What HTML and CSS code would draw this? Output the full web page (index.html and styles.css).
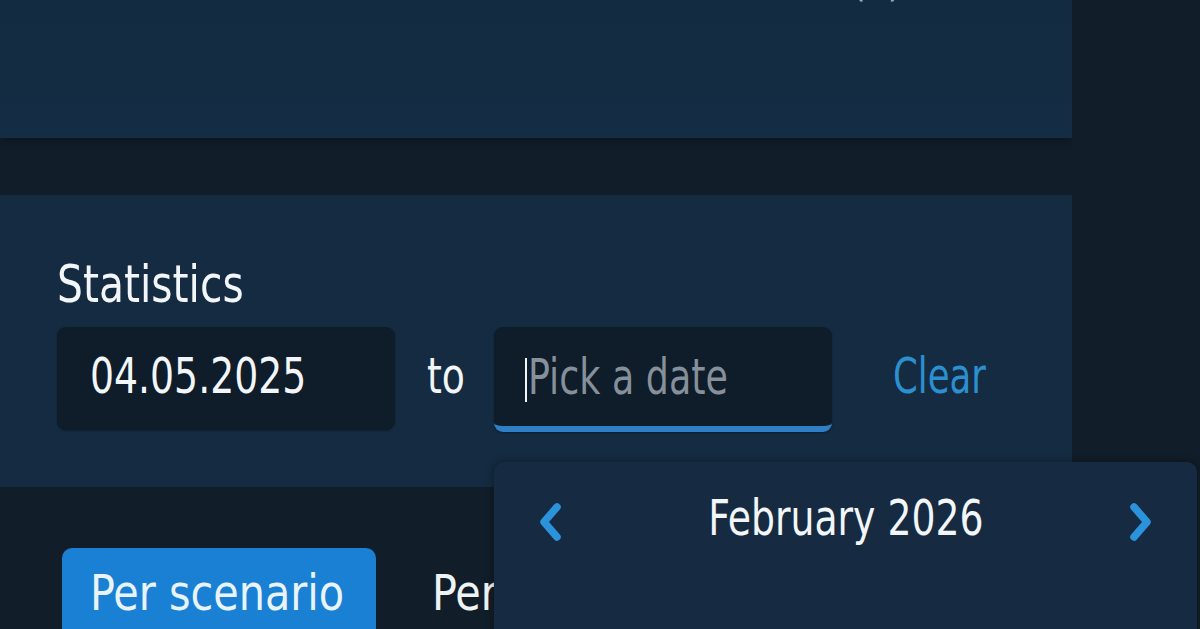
FILE: index.html
```html
<!DOCTYPE html>
<html>
<head>
<meta charset="utf-8">
<link rel="stylesheet" href="styles.css">
</head>
<body>
<div class="page">
  <main class="main">
    <section class="card card-top">
      <div class="top-line"><span class="cond">(1)</span></div>
    </section>
    <section class="card card-stats">
      <h2 class="stats-title"><span class="cond wide">Statistics</span></h2>
      <div class="range">
        <div class="date-input"><span class="date-value cond">04.05.2025</span></div>
        <span class="range-to"><span class="cond">to</span></span>
        <div class="date-input active"><span class="caret"></span><span class="placeholder cond narrow">Pick a date</span></div>
        <button class="clear-btn"><span class="cond narrower">Clear</span></button>
      </div>
    </section>
    <div class="tabs">
      <button class="tab selected"><span class="cond wider">Per scenario</span></button>
      <button class="tab"><span class="cond wider">Per user</span></button>
    </div>
  </main>
  <aside class="side"></aside>

  <div class="calendar">
    <div class="cal-head">
      <button class="cal-nav"><svg width="28" height="40" viewBox="0 0 28 40"><path d="M21 4 L8 19 L21 34" fill="none" stroke="#2b93dc" stroke-width="7.5" stroke-linecap="round" stroke-linejoin="round"/></svg></button>
      <span class="cal-title"><span class="cond center">February 2026</span></span>
      <button class="cal-nav"><svg width="28" height="40" viewBox="0 0 28 40"><path d="M7 4 L20 19 L7 34" fill="none" stroke="#2b93dc" stroke-width="7.5" stroke-linecap="round" stroke-linejoin="round"/></svg></button>
    </div>
  </div>
</div>
</body>
</html>
```

FILE: styles.css
```css
* { box-sizing: border-box; }
html, body {
  margin: 0;
  padding: 0;
  width: 1200px;
  height: 629px;
  overflow: hidden;
  background: #111d29;
  font-family: "DejaVu Sans Condensed", "DejaVu Sans", sans-serif;
  color: #eef3f6;
}
.cond {
  display: inline-block;
  transform: scaleX(0.84);
  transform-origin: left center;
  white-space: nowrap;
}
.cond.wide { transform: scaleX(0.89); }
.cond.wider { transform: scaleX(0.92); }
.cond.narrow { transform: scaleX(0.81); }
.cond.narrower { transform: scaleX(0.79); }
.cond.center {
  transform-origin: center center;
}
.page {
  position: relative;
  display: flex;
  width: 1200px;
  height: 629px;
}
.main {
  width: 1072px;
  flex-shrink: 0;
  display: flex;
  flex-direction: column;
}
.side {
  flex: 1;
  background: #111d29;
}
.card {
  flex-shrink: 0;
  background: #142b41;
  overflow: hidden;
}
.card-top {
  height: 138px;
  background: linear-gradient(#132b40, #152d44);
  box-shadow: 0 4px 6px rgba(0,0,0,0.25);
}
.top-line {
  margin-top: -51px;
  padding-left: 852px;
  font-size: 46px;
  line-height: 60px;
  color: #9fb0c0;
}
.card-stats {
  margin-top: 57px;
  height: 292px;
  padding: 62px 0 0 57px;
}
.stats-title {
  margin: 0;
  font-weight: normal;
  font-size: 51px;
  line-height: 56px;
  color: #f2f6f8;
}
.range {
  margin-top: 14px;
  display: flex;
  align-items: flex-start;
}
.date-input {
  width: 338px;
  height: 103px;
  flex-shrink: 0;
  background: #0f1c29;
  border-radius: 9px;
  display: flex;
  align-items: center;
  padding-left: 33px;
  padding-bottom: 6px;
  box-shadow: 0 1px 2px rgba(0,0,0,0.3);
}
.date-input.active {
  height: 105px;
  border-bottom: 6px solid #2f7fc6;
  padding-left: 31px;
  padding-top: 0;
  padding-bottom: 0;
}
.date-value {
  font-size: 50px;
  color: #f2f6f8;
}
.range-to {
  width: 35px;
  margin: 0 32px;
  height: 97px;
  display: flex;
  align-items: center;
  font-size: 50px;
  color: #f2f6f8;
}
.caret {
  width: 2px;
  height: 44px;
  background: #f2f6f8;
  margin-right: 1px;
  margin-top: 6px;
}
.placeholder {
  font-size: 50px;
  color: #86909a;
}
.clear-btn {
  margin-left: 61px;
  height: 97px;
  border: none;
  background: none;
  padding: 0;
  font-family: inherit;
  font-size: 50px;
  color: #2b8fd0;
}
.tabs {
  margin-top: 61px;
  padding-left: 62px;
  display: flex;
  gap: 28px;
  flex-shrink: 0;
}
.tab {
  height: 110px;
  padding: 16px 28px 0;
  border: none;
  border-radius: 10px 10px 0 0;
  background: none;
  font-family: inherit;
  font-size: 50px;
  color: #eef3f6;
  display: flex;
  align-items: flex-start;
  white-space: nowrap;
}
.tab.selected {
  width: 314px;
  background: #1a80d3;
  color: #e8f4fa;
}
.calendar {
  position: absolute;
  left: 494px;
  top: 462px;
  width: 703px;
  height: 200px;
  background: #162b41;
  border-radius: 10px;
  box-shadow: 0 0 8px rgba(0,0,0,0.35);
}
.cal-head {
  display: flex;
  align-items: center;
  justify-content: space-between;
  padding: 36px 42px 0 42px;
}
.cal-nav {
  background: none;
  border: none;
  padding: 0;
  width: 28px;
  height: 40px;
  display: flex;
}
.cal-title {
  font-size: 50px;
  line-height: 60px;
  color: #f2f6f8;
  margin-top: -10px;
}
```
